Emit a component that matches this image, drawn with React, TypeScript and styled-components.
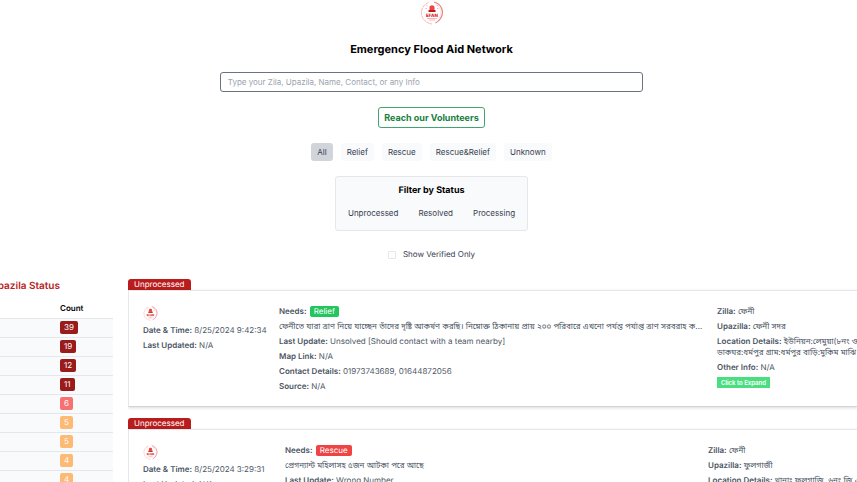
import React, { useState } from "react";
import styled, { createGlobalStyle } from "styled-components";

const GlobalStyle = createGlobalStyle`
  *, *::before, *::after { box-sizing: border-box; }
  body {
    margin: 0;
    overflow: hidden;
    background: #fff;
    color: #111827;
    font-family: Inter, "Noto Sans Bengali", "Noto Sans", sans-serif;
    font-size: 8px;
    line-height: 11px;
    text-rendering: geometricPrecision;
  }
  button, input { font: inherit; color: inherit; margin: 0; }
  h1, h2, p { margin: 0; }
`;

const Header = styled.header`
  display: flex;
  flex-direction: column;
  align-items: center;
  padding: 1px 2px 0 8px;
`;

const Title = styled.h1`
  margin-top: 17px;
  font-size: 11px;
  line-height: 15px;
  font-weight: 700;
  color: #000;
`;

const Search = styled.input`
  width: 50%;
  min-width: 200px;
  height: 20px;
  margin-top: 15px;
  padding: 0 7px;
  border: 1px solid #6b7280;
  border-radius: 3px;
  outline: none;
  background: #fff;
  &::placeholder { color: #9ca3af; opacity: 1; }
`;

const Volunteers = styled.button`
  height: 21px;
  margin-top: 15px;
  padding: 0 5px;
  border: 1px solid #3fa56c;
  border-radius: 3px;
  background: #fff;
  color: #15803d;
  font-size: 9px;
  font-weight: 700;
`;

const Tabs = styled.nav`
  display: flex;
  gap: 8px;
  margin-top: 15px;
`;

const Tab = styled.button<{ $active: boolean }>`
  height: 18px;
  padding: 0 6px;
  border: 0;
  border-radius: 3px;
  color: #374151;
  background: ${(p) => (p.$active ? "#d1d5db" : "#f9fafb")};
`;

const StatusBox = styled.section`
  display: flex;
  flex-direction: column;
  align-items: center;
  height: 55px;
  margin-top: 15px;
  padding: 7px 6px;
  border: 1px solid #e5e7eb;
  border-radius: 3px;
  background: #f9fafb;
`;

const StatusTitle = styled.h2`
  font-size: 9px;
  line-height: 13px;
  font-weight: 700;
  color: #000;
`;

const StatusList = styled.div`
  display: flex;
  gap: 8px;
  margin-top: 8px;
`;

const StatusButton = styled.button`
  height: 16px;
  padding: 0 6px;
  border: 0;
  background: transparent;
  color: #374151;
`;

const Verified = styled.label`
  display: flex;
  align-items: center;
  gap: 7px;
  margin-top: 18px;
  color: #374151;
  input {
    appearance: none;
    width: 8px;
    height: 8px;
    border: 1px solid #e5e7eb;
    border-radius: 1px;
    background: #fff;
  }
  input:checked { background: #15803d; }
`;

const Body = styled.main`
  display: flex;
  align-items: flex-start;
  gap: 15px;
  margin-top: 19px;
`;

const Sidebar = styled.aside`
  flex: 0 0 113px;
  overflow: hidden;
`;

const SideTitle = styled.h2`
  display: flex;
  justify-content: flex-end;
  padding-right: 53px;
  white-space: nowrap;
  color: #b91c1c;
  font-size: 10px;
  line-height: 14px;
  font-weight: 600;
`;

const Counts = styled.table`
  width: 100%;
  margin-top: 6px;
  border-collapse: collapse;
  th, td {
    height: 19px;
    padding: 0 0 0 60px;
    text-align: left;
    vertical-align: middle;
  }
  th { font-weight: 600; color: #000; }
  td {
    border-top: 1px solid #e5e7eb;
    background: #f9fafb;
  }
`;

const CountBadge = styled.span<{ $color: string }>`
  display: block;
  width: fit-content;
  padding: 1px 4px;
  border-radius: 2px;
  background: ${(p) => p.$color};
  color: #fff;
`;

const Reports = styled.section`
  flex: 1;
  min-width: 0;
  display: flex;
  flex-direction: column;
  gap: 7px;
  color: #4b5563;
`;

const Report = styled.article`
  overflow: hidden;
  padding-bottom: 4px;
  white-space: nowrap;
`;

const StatusTab = styled.div`
  width: fit-content;
  padding: 0 6px;
  border-radius: 3px 3px 0 0;
  background: #b91c1c;
  color: #fff;
`;

const Card = styled.div<{ $second: boolean }>`
  display: grid;
  grid-template-columns: ${(p) =>
    p.$second ? "142px 423fr 149fr" : "136px 438fr 140fr"};
  height: 117px;
  padding: 15px 0 0 14px;
  border: 1px solid #e5e7eb;
  border-right: 0;
  border-bottom: 1px solid #d1d5db;
  box-shadow: 0 1px 3px rgba(0, 0, 0, 0.15);
`;

const Column = styled.div`
  display: flex;
  flex-direction: column;
  align-items: flex-start;
  gap: 4px;
  min-width: 0;
`;

const Label = styled.strong`
  font-weight: 600;
`;

const NeedBadge = styled.span<{ $color: string }>`
  display: inline-block;
  margin-left: 1px;
  padding: 0 4px;
  border-radius: 2px;
  background: ${(p) => p.$color};
  color: #fff;
`;

const Expand = styled.button`
  height: 11px;
  padding: 0 4px;
  border: 0;
  background: #4ade80;
  color: #fff;
  font-size: 6px;
  line-height: 11px;
  font-weight: 600;
`;

const LogoMark = styled.svg`
  display: block;
  flex: none;
`;

const Logo = ({ size }: { size: number }) => (
  <LogoMark width={size} height={size} viewBox="0 0 48 48" aria-label="EFAN">
    <g fill="none" stroke="#f3a0a0">
      <path d="M17 3C3 9-1 25 7 36c4 6 10 9 17 10" strokeWidth="1.5" strokeDasharray="7 1" />
      <path d="M28 2c16 4 21 21 13 33-3 5-6 7-10 9" strokeWidth="2.5" stroke="#ef8080" />
      <path d="M31 6c11 6 13 18 7 28" strokeWidth="1" stroke="#f9cccc" />
    </g>
    <path d="M19 18v-5c0-6 10-6 10 0v5z" fill="#ef4444" />
    <path d="M17 18h14v4H17z" fill="#b91c1c" />
    <path d="M15 10l-3-2M33 10l3-2M14 15h-3M34 15h3" stroke="#f3a0a0" strokeWidth="1.5" />
    <text x="24" y="32" textAnchor="middle" fontSize="9" fontWeight="800" fill="#dc2626">EFAN</text>
    <path d="M14 35h20M18 38h12" stroke="#f3a0a0" strokeWidth="1.5" />
  </LogoMark>
);

const Field = ({ label, children }: { label: string; children: React.ReactNode }) => (
  <p>
    <Label>{label}:</Label> {children}
  </p>
);

const kinds = ["All", "Relief", "Rescue", "Rescue&Relief", "Unknown"];
const statuses = ["Unprocessed", "Resolved", "Processing"];
const counts = [39, 19, 12, 11, 6, 5, 5, 4, 4];
const countColor = (n: number) => (n > 10 ? "#991b1b" : n > 5 ? "#f87171" : "#fdba74");

const reports = [
  {
    date: "8/25/2024 9:42:34",
    need: "Relief",
    color: "#22c55e",
    message:
      "ফেনীতে যারা ত্রাণ নিয়ে যাচ্ছেন তাঁদের দৃষ্টি আকর্ষণ করছি। নিম্নোক্ত ঠিকানায় প্রায় ২০০ পরিবারে এখনো পর্যন্ত পর্যাপ্ত ত্রাণ সরবরাহ ক...",
    update: "Unsolved [Should contact with a team nearby]",
    contact: "01973743689, 01644872056",
    upazilla: "ফেনী সদর",
    location: ["ইউনিয়ন:লেমুয়া(৮নং ওয়ার্ড)", "ডাকঘর:ধর্মপুর গ্রাম:ধর্মপুর বাড়ি:মুকিম মাঝি"],
  },
  {
    date: "8/25/2024 3:29:31",
    need: "Rescue",
    color: "#ef4444",
    message: "প্রেগন্যান্ট মহিলাসহ ৫জন আটকা পরে আছে",
    update: "Wrong Number",
    contact: "N/A",
    upazilla: "ফুলগাজী",
    location: ["থানাঃ ফুলগাজি, ৬নং জি এম হাট"],
  },
];

export default function App() {
  const [kind, setKind] = useState("All");
  return (
    <>
      <GlobalStyle />
      <Header>
        <Logo size={24} />
        <Title>Emergency Flood Aid Network</Title>
        <Search aria-label="Search" placeholder="Type your Zila, Upazila, Name, Contact, or any Info" />
        <Volunteers>Reach our Volunteers</Volunteers>
        <Tabs>
          {kinds.map((k) => (
            <Tab key={k} $active={k === kind} onClick={() => setKind(k)}>{k}</Tab>
          ))}
        </Tabs>
        <StatusBox>
          <StatusTitle>Filter by Status</StatusTitle>
          <StatusList>
            {statuses.map((s) => <StatusButton key={s}>{s}</StatusButton>)}
          </StatusList>
        </StatusBox>
        <Verified>
          <input type="checkbox" />
          Show Verified Only
        </Verified>
      </Header>
      <Body>
        <Sidebar>
          <SideTitle>Upazila Status</SideTitle>
          <Counts>
            <thead><tr><th>Count</th></tr></thead>
            <tbody>
              {counts.map((n, i) => (
                <tr key={i}><td><CountBadge $color={countColor(n)}>{n}</CountBadge></td></tr>
              ))}
            </tbody>
          </Counts>
        </Sidebar>
        <Reports>
          {reports.map((r, i) => (
            <Report key={r.date}>
              <StatusTab>Unprocessed</StatusTab>
              <Card $second={i === 1}>
                <Column>
                  <Logo size={15} />
                  <Field label="Date & Time">{r.date}</Field>
                  <Field label="Last Updated">N/A</Field>
                </Column>
                <Column>
                  <Field label="Needs"><NeedBadge $color={r.color}>{r.need}</NeedBadge></Field>
                  <p>{r.message}</p>
                  <Field label="Last Update">{r.update}</Field>
                  <Field label="Map Link">N/A</Field>
                  <Field label="Contact Details">{r.contact}</Field>
                  <Field label="Source">N/A</Field>
                </Column>
                <Column>
                  <Field label="Zilla">ফেনী</Field>
                  <Field label="Upazilla">{r.upazilla}</Field>
                  <Field label="Location Details">
                    {r.location.map((line, n) => (
                      <React.Fragment key={line}>{n > 0 && <br />}{line}</React.Fragment>
                    ))}
                  </Field>
                  <Field label="Other Info">N/A</Field>
                  <Expand>Click to Expand</Expand>
                </Column>
              </Card>
            </Report>
          ))}
        </Reports>
      </Body>
    </>
  );
}
